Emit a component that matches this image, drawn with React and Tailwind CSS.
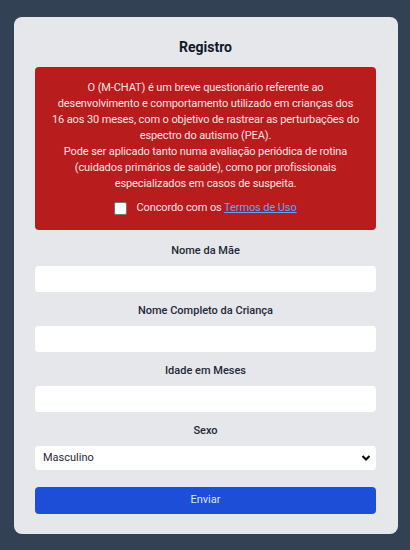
export default function App() {
  const font = { fontFamily: 'Roboto, "Noto Sans", sans-serif' }
  const fields = ['Nome da Mãe', 'Nome Completo da Criança', 'Idade em Meses']

  return (
    <div className="min-h-[550px] bg-[#334155] pt-[17px] pl-[14px]" style={font}>
      <div className="w-[384px] rounded-lg bg-[#e5e7eb] pt-5 pb-5 pl-[21px] pr-[22px]">
        <h1 className="text-center text-sm font-bold leading-5 text-[#111827]">Registro</h1>

        {/* ── aviso M-CHAT ── */}
        <div className="mt-[10px] rounded bg-[#b91c1c] px-2 pt-[13px] pb-[14px] text-center text-[11px] leading-4 tracking-[-0.1px] text-[#fde2e2]">
          <p className="whitespace-nowrap">
            O (M-CHAT) é um breve questionário referente ao<br />
            desenvolvimento e comportamento utilizado em crianças dos<br />
            16 aos 30 meses, com o objetivo de rastrear as perturbações do<br />
            espectro do autismo (PEA).<br />
            Pode ser aplicado tanto numa avaliação periódica de rotina<br />
            (cuidados primários de saúde), como por profissionais<br />
            especializados em casos de suspeita.
          </p>
          <label className="mt-2 flex items-center justify-center gap-[9px]">
            <span className="h-[13px] w-[13px] rounded-[2px] border border-[#767676] bg-white" />
            <span>
              Concordo com os <a className="text-[#60a5fa] underline">Termos de Uso</a>
            </span>
          </label>
        </div>

        {/* ── campos ── */}
        <div className="mt-[13px] flex flex-col gap-[11px]">
          {fields.map(f => (
            <div key={f}>
              <p className="text-center text-[11px] font-medium leading-4 text-[#1f2937]">{f}</p>
              <div className="mt-[7px] h-[26px] rounded bg-white" />
            </div>
          ))}
          <div>
            <p className="text-center text-[11px] font-medium leading-4 text-[#1f2937]">Sexo</p>
            <div className="mt-[7px] flex h-6 items-center justify-between rounded bg-white pl-2 pr-[5px] text-[11px] text-[#1f2937]">
              <span>Masculino</span>
              <svg width="10" height="8" viewBox="0 0 10 8">
                <path d="M1.5 2 L5 5.5 L8.5 2" fill="none" stroke="#111" strokeWidth="2.2" />
              </svg>
            </div>
          </div>
        </div>

        <button className="mt-[17px] h-[27px] w-full rounded bg-[#1d4ed8] text-[11px] text-[#dbe4ff]">
          Enviar
        </button>
      </div>
    </div>
  )
}
